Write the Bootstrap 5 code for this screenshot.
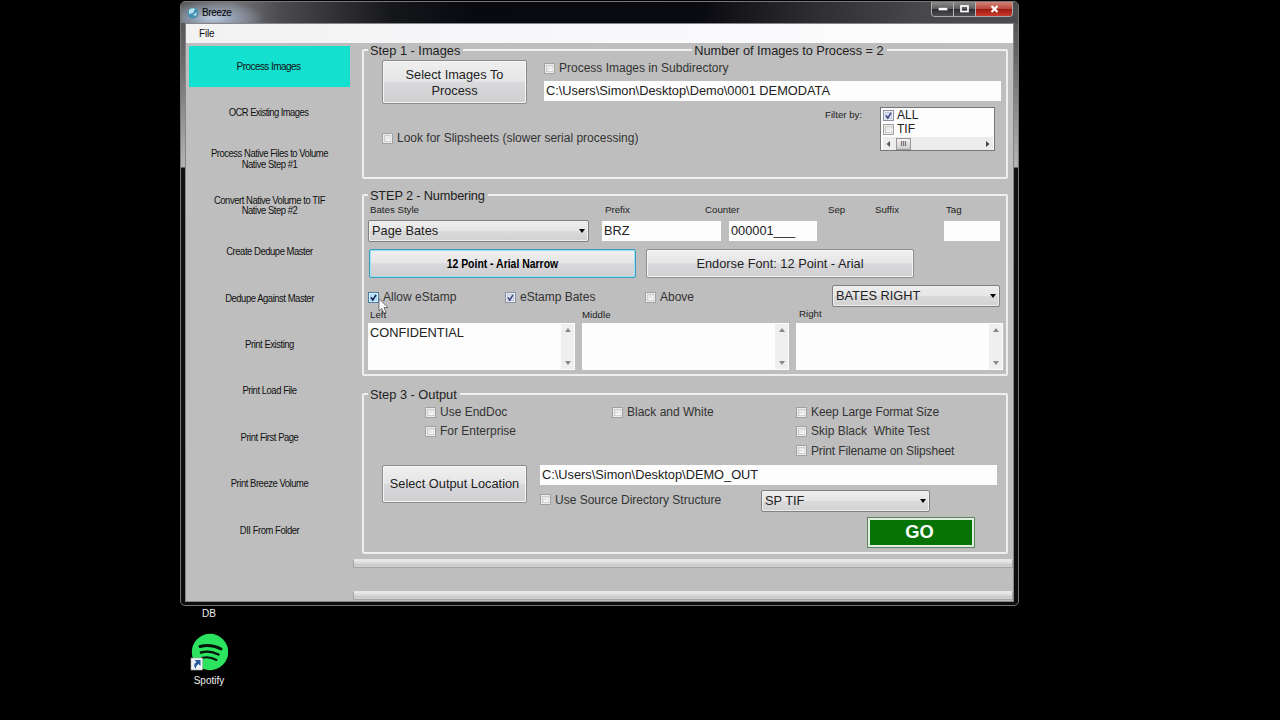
<!DOCTYPE html>
<html lang="en">
<head>
<meta charset="utf-8">
<meta name="viewport" content="width=device-width, initial-scale=1">
<title>Breeze</title>
<link href="https://cdn.jsdelivr.net/npm/bootstrap@5.3.0/dist/css/bootstrap.min.css" rel="stylesheet">
<style>
  body { background:#000; width:1280px; height:720px; font-family:"Liberation Sans",Arial,sans-serif; font-size:12.8px; line-height:16px; color:#222; }
  /* window frame */
  .win { left:180px; top:1px; width:839px; height:605px; border:1px solid #77777a; border-radius:5px; padding:0 4px 3px;
    background:
      linear-gradient(#4a4a4c,#6b6b6d 60px,#b5b5b6 165px,#111 166px,#0c0c0e) left/4px 100% no-repeat,
      linear-gradient(#4a4a4c,#6b6b6d 60px,#b5b5b6 165px,#111 166px,#0c0c0e) right/4px 100% no-repeat, #0c0c0e; }
  .titlebar { height:21px; margin:0 -4px; padding-left:6px; border-radius:4px 4px 0 0;
    background:radial-gradient(ellipse 52px 17px at 32px 16px,#bccbe0 0%,#98a5b8d8 40%,#0000 100%),
      linear-gradient(90deg,#58585b 0,#77777b 50px,#4b4b4f 100px,#16171b 210px,#090a10 290px,#0a0b10 520px,#303033 640px,#48484b 740px,#4c4c4e); }
  .titlebar .caption { font-size:10px; letter-spacing:-.35px; color:#000; margin-left:3px; }
  .winbtns { height:15px; margin-right:5px; border:1px solid #aaa; border-top:0; border-radius:0 0 4px 4px; overflow:hidden; }
  .winbtns span { display:flex; align-items:center; justify-content:center; background:linear-gradient(#8a8a8c,#5d5d60 48%,#2d2d30 50%,#505054); border-right:1px solid #b5b5b5; width:22px; }
  .winbtns .closer { width:36px; border:0; background:linear-gradient(#d38377,#b84a3c 48%,#9c1810 50%,#cc3b2c); }
  .client { height:579px; border:1px solid #85858a; background:#bebebe; }
  .menu { height:19px; background:linear-gradient(90deg,#f2f2f2,#f7f7fa 40%,#fdfdfe); font-size:10px; letter-spacing:-.2px; padding-left:13px; color:#111; }
  /* left navigation */
  .side { width:167px; padding:3px 0 0 3px; }
  .side div { width:161px; height:41px; margin-bottom:5.4px; padding-top:1px; font-size:10px; line-height:10.5px; letter-spacing:-.48px; color:#111; text-align:center; display:flex; align-items:center; justify-content:center; }
  .side div:not(.on) { transform:scaleX(.945); }
  .side .on { background:#14e0cf; letter-spacing:-.56px; padding-right:2px; }
  .side .t1 { letter-spacing:-.6px; padding-right:2px; }
  /* group boxes */
  .group { width:646px; margin-left:9px; border:2px solid #efefef; border-radius:2px; }
  .g1 { height:130px; margin-top:6px; } .g2 { height:182px; margin-top:15px; } .g3 { height:161px; margin-top:17px; }
  .group > .head { height:14px; margin-top:-8px; line-height:15px; padding-left:4px; }
  .head span { background:#bebebe; padding:0 3px 0 2px; white-space:pre; }
  .head .count { margin-left:229px; padding-right:4px; letter-spacing:-.06px; }
  .g2 .head span { letter-spacing:-.17px; }
  .rowgrid { display:grid; align-items:start; white-space:nowrap; }
  .push { border:1px solid #8c8c8c; border-radius:2px; box-shadow:inset 0 0 0 1px #f6f6f6; background:linear-gradient(#efefef,#e6e6e8 48%,#d9d9dc 51%,#cfcfd1); color:#222; text-align:center; display:flex; align-items:center; justify-content:center; padding-top:1px; }
  .focused { border-color:#3c9dbd; box-shadow:inset 0 0 0 1px #9be0f4; color:#000; font-weight:bold; }
  .focused span { transform:scaleX(.815); font-size:12.8px; }
  .field { background:#fdfdfd; height:20px; line-height:19px; padding-left:2px; white-space:pre; }
  .combo { height:22px; border:1px solid #808080; border-radius:2px; background:linear-gradient(#ededed,#e6e6e6 48%,#dadada 51%,#d2d2d4); box-shadow:inset 0 0 0 1px #eee; padding:0 3px 0 3px; display:flex; justify-content:space-between; align-items:center; line-height:20px; }
  .combo::after { content:""; border:3.5px solid transparent; border-top:4px solid #000; border-bottom:0; }
  .tick { display:flex; align-items:center; font-size:12px; height:12px; line-height:12px; color:#333; }
  .tick svg { width:11px; height:11px; margin-right:4px; flex:none; }
  .tiny { font-size:9.7px; line-height:11px; color:#222; }
  /* group 1 */
  .r11 { grid-template-columns:145px 457px; column-gap:17px; margin:3px 0 0 18px; }
  .r11 .push { height:44px; }
  .r11 .tick { margin:2px 0 7px; }
  .r12 { grid-template-columns:443px 55px 115px; margin:3px 0 0 18px; }
  .r12 .look { margin-top:25px; }
  .r12 .tiny { margin-top:2px; }
  .list { height:44px; border:1px solid #777; background:#fdfdfd; padding:2px 1px 0 2px; }
  .list .tick { height:14px; color:#222; }
  .list .tick svg { margin-right:3px; }
  .list .tick:first-child { margin-top:-2px; }
  .hbar { background:#ececec; height:13px; padding:0 3px; margin-top:1px; }
  .grip { width:15px; height:12px; border:1px solid #999; background:linear-gradient(#f4f4f4,#ccc); margin-left:5px; font-size:7px; line-height:9px; text-align:center; }
  /* group 2 */
  .r21 { grid-template-columns:235px 100px 123px 47px 71px auto; margin:2px 0 0 6px; }
  .r22 { grid-template-columns:221px 13px 119px 8px 88px 127px 56px; margin:5px 0 0 4px; }
  .r22 .field { margin-top:1px; }
  .r23 { grid-template-columns:267px 268px; column-gap:10px; margin:7px 0 0 5px; }
  .r23 .push { height:29px; }
  .r24 { grid-template-columns:137px 140px 187px 168px; margin:7px 0 0 4px; }
  .r24 .tick { margin-top:6px; }
  .r25 { grid-template-columns:212px 217px auto; margin:2px 0 0 6px; }
  .r25 span:last-child { margin-top:-1px; }
  .r26 { grid-template-columns:207px 207px 207px; column-gap:7px; margin:3px 0 0 4px; }
  .area { height:47px; background:#fdfdfd; padding:2px 1px 1px 2px; }
  .vbar { width:13px; background:#efefef; margin-top:-1px; }
  /* group 3 */
  .r31 { grid-template-columns:187px 184px auto; margin:5px 0 0 61px; row-gap:7.3px; }
  .r31 .tick:nth-child(3) { letter-spacing:-.09px; }
  .r31 .tick:last-child { letter-spacing:-.13px; }
  .r32 { grid-template-columns:145px 457px; column-gap:13px; margin:8px 0 0 18px; }
  .r32 .push { height:38px; }
  .r33 { grid-template-columns:221px 169px; margin-top:5px; }
  .r33 .tick { margin-top:4px; }
  .go { width:108px; height:31px; margin:5px 0 0 503px; background:#077307; border:1px solid #5f825f; box-shadow:inset 0 0 0 2px #e0f0e0; color:#fff; font-weight:bold; font-size:18.3px; padding-right:3px; }
  .bar { height:9px; border:1px solid #a5a5a5; border-top-color:#e6e6e6; background:linear-gradient(#ececec,#d8d8d8 50%,#c7c7c7 55%,#d2d2d2); }
  .b1 { margin-top:5px; } .b2 { margin-top:23px; }
  .pointer { left:378px; top:298px; }
  /* desktop shortcuts */
  .desk { left:180px; top:608px; width:58px; color:#eee; font-size:10px; line-height:11px; text-align:center; }
  .desk svg { margin:14px 0 4px; }
</style>
</head>
<body class="position-relative overflow-hidden m-0">
<svg class="d-none">
  <symbol id="off" viewBox="0 0 11 11"><rect x=".5" y=".5" width="10" height="10" fill="#ececec" stroke="#a2a2a2"/><rect x="2.5" y="2.5" width="6" height="6" fill="#e9e9e9" stroke="#cdcdcd"/><path d="M4 7.5h4V4" fill="none" stroke="#fff"/></symbol>
  <symbol id="on" viewBox="0 0 11 11"><rect x=".5" y=".5" width="10" height="10" fill="#eceef6" stroke="#8b91a3"/><rect x="2.5" y="2.5" width="6" height="6" fill="#dfe4f3" stroke="#c3c9dc"/><path d="M3 5.3 4.8 8 8 2.8" fill="none" stroke="#3b4888" stroke-width="1.5"/></symbol>
  <symbol id="hot" viewBox="0 0 11 11"><rect x=".5" y=".5" width="10" height="10" fill="#d8effc" stroke="#4d7fa8"/><rect x="2.5" y="2.5" width="6" height="6" fill="#c5e6fa" stroke="#a9d5f0"/><path d="M3 5.3 4.8 8 8 2.8" fill="none" stroke="#15265f" stroke-width="1.6"/></symbol>
</svg>

<div class="win position-absolute">
  <div class="titlebar d-flex align-items-center">
    <svg width="12" height="12" viewBox="0 0 12 12"><circle cx="6" cy="6" r="5.5" fill="#4790b2"/><path d="M2 3Q5 0 8 2L6 6 2 7ZM6 8 10 5 9 9Z" fill="#b7e3f0"/></svg>
    <span class="caption">Breeze</span>
    <div class="winbtns d-flex ms-auto align-self-start">
      <span><svg width="10" height="4"><rect x=".5" y=".5" width="9" height="3" fill="#fff" stroke="#555" stroke-width=".5"/></svg></span>
      <span><svg width="9" height="8"><rect x="1" y="1" width="7" height="5.5" fill="none" stroke="#fff" stroke-width="1.7"/></svg></span>
      <span class="closer"><svg width="9" height="8"><path d="M1.5 1 7.5 7M7.5 1 1.5 7" stroke="#fff" stroke-width="2.2"/></svg></span>
    </div>
  </div>
  <div class="client">
    <div class="menu d-flex align-items-center">File</div>
    <div class="d-flex">
      <nav class="side">
        <div class="on">Process Images</div>
        <div class="t1">OCR Existing Images</div>
        <div>Process Native Files to Volume<br>Native Step #1</div>
        <div>Convert Native Volume to TIF<br>Native Step #2</div>
        <div>Create Dedupe Master</div>
        <div>Dedupe Against Master</div>
        <div>Print Existing</div>
        <div>Print Load File</div>
        <div>Print First Page</div>
        <div>Print Breeze Volume</div>
        <div>DII From Folder</div>
      </nav>
      <main class="flex-grow-1">
        <section class="group g1">
          <div class="head d-flex"><span>Step 1 - Images</span><span class="count">Number of Images to Process = 2</span></div>
          <div class="rowgrid r11">
            <div class="push">Select Images To<br>Process</div>
            <div>
              <div class="tick"><svg><use href="#off"/></svg>Process Images in Subdirectory</div>
              <div class="field">C:\Users\Simon\Desktop\Demo\0001 DEMODATA</div>
            </div>
          </div>
          <div class="rowgrid r12">
            <div class="tick look"><svg><use href="#off"/></svg>Look for Slipsheets (slower serial processing)</div>
            <div class="tiny">Filter by:</div>
            <div class="list">
              <div class="tick"><svg><use href="#on"/></svg>ALL</div>
              <div class="tick"><svg><use href="#off"/></svg>TIF</div>
              <div class="hbar d-flex align-items-center">
                <svg width="5" height="6"><path d="M4 0v6L.5 3Z" fill="#555"/></svg>
                <div class="grip">III</div>
                <svg class="ms-auto" width="5" height="6"><path d="M1 0v6L4.500 3Z" fill="#444"/></svg>
              </div>
            </div>
          </div>
        </section>

        <section class="group g2">
          <div class="head d-flex"><span>STEP 2 - Numbering</span></div>
          <div class="rowgrid tiny r21"><span>Bates Style</span><span>Prefix</span><span>Counter</span><span>Sep</span><span>Suffix</span><span>Tag</span></div>
          <div class="rowgrid r22">
            <div class="combo">Page Bates</div><i></i>
            <div class="field">BRZ</div><i></i>
            <div class="field">000001___</div><i></i>
            <div class="field"></div>
          </div>
          <div class="rowgrid r23">
            <div class="push focused"><span>12 Point - Arial Narrow</span></div>
            <div class="push">Endorse Font: 12 Point - Arial</div>
          </div>
          <div class="rowgrid r24">
            <div class="tick"><svg><use href="#hot"/></svg>Allow eStamp</div>
            <div class="tick"><svg><use href="#on"/></svg>eStamp Bates</div>
            <div class="tick"><svg><use href="#off"/></svg>Above</div>
            <div class="combo">BATES RIGHT</div>
          </div>
          <div class="rowgrid tiny r25"><span>Left</span><span>Middle</span><span>Right</span></div>
          <div class="rowgrid r26">
            <div class="area d-flex justify-content-between">CONFIDENTIAL
              <div class="vbar d-flex flex-column justify-content-between align-items-center py-1"><svg width="6" height="4"><path d="M0 4h6L3 0Z" fill="#888"/></svg><svg width="6" height="4"><path d="M0 0h6L3 4Z" fill="#888"/></svg></div></div>
            <div class="area d-flex justify-content-end">
              <div class="vbar d-flex flex-column justify-content-between align-items-center py-1"><svg width="6" height="4"><path d="M0 4h6L3 0Z" fill="#888"/></svg><svg width="6" height="4"><path d="M0 0h6L3 4Z" fill="#888"/></svg></div></div>
            <div class="area d-flex justify-content-end">
              <div class="vbar d-flex flex-column justify-content-between align-items-center py-1"><svg width="6" height="4"><path d="M0 4h6L3 0Z" fill="#888"/></svg><svg width="6" height="4"><path d="M0 0h6L3 4Z" fill="#888"/></svg></div></div>
          </div>
        </section>

        <section class="group g3">
          <div class="head d-flex"><span>Step 3 - Output</span></div>
          <div class="rowgrid r31">
            <div class="tick"><svg><use href="#off"/></svg>Use EndDoc</div>
            <div class="tick"><svg><use href="#off"/></svg>Black and White</div>
            <div class="tick"><svg><use href="#off"/></svg>Keep Large Format Size</div>
            <div class="tick"><svg><use href="#off"/></svg>For Enterprise</div>
            <i></i>
            <div class="tick"><svg><use href="#off"/></svg>Skip Black&nbsp; White Test</div>
            <i></i><i></i>
            <div class="tick"><svg><use href="#off"/></svg>Print Filename on Slipsheet</div>
          </div>
          <div class="rowgrid r32">
            <div class="push">Select Output Location</div>
            <div>
              <div class="field">C:\Users\Simon\Desktop\DEMO_OUT</div>
              <div class="rowgrid r33">
                <div class="tick"><svg><use href="#off"/></svg>Use Source Directory Structure</div>
                <div class="combo">SP TIF</div>
              </div>
            </div>
          </div>
          <div class="go d-flex align-items-center justify-content-center">GO</div>
        </section>
        <div class="bar b1"></div>
        <div class="bar b2"></div>
      </main>
    </div>
  </div>
</div>

<svg class="pointer position-absolute" width="12" height="18" viewBox="0 0 12 18"><path d="M1 .8V13l2.800-2.600 2 4.800 2.200-.9-2-4.700H10Z" fill="#fff" stroke="#555" stroke-width=".8"/></svg>

<div class="desk position-absolute d-flex flex-column align-items-center">
  <span>DB</span>
  <svg width="38" height="38" viewBox="0 0 38 38">
    <circle cx="20" cy="19" r="18.200" fill="#2ce35f"/>
    <g fill="none" stroke="#05130a" stroke-linecap="round"><path d="M10 13.500Q21 10.500 31 16" stroke-width="2.900"/><path d="M11 19.500Q20 17 28.500 21.500" stroke-width="2.400"/><path d="M12 25Q19 23 26.500 27" stroke-width="2"/></g>
    <rect x="1" y="25" width="11.500" height="12" fill="#eef2f8" stroke="#aaa" stroke-width=".6"/>
    <path d="M4.500 27h6v6L8.500 31Q5.500 33 6 36 2 32 6.500 29Z" fill="#275a9e"/>
  </svg>
  <span>Spotify</span>
</div>
<script src="https://cdn.jsdelivr.net/npm/bootstrap@5.3.0/dist/js/bootstrap.bundle.min.js"></script>
</body>
</html>
